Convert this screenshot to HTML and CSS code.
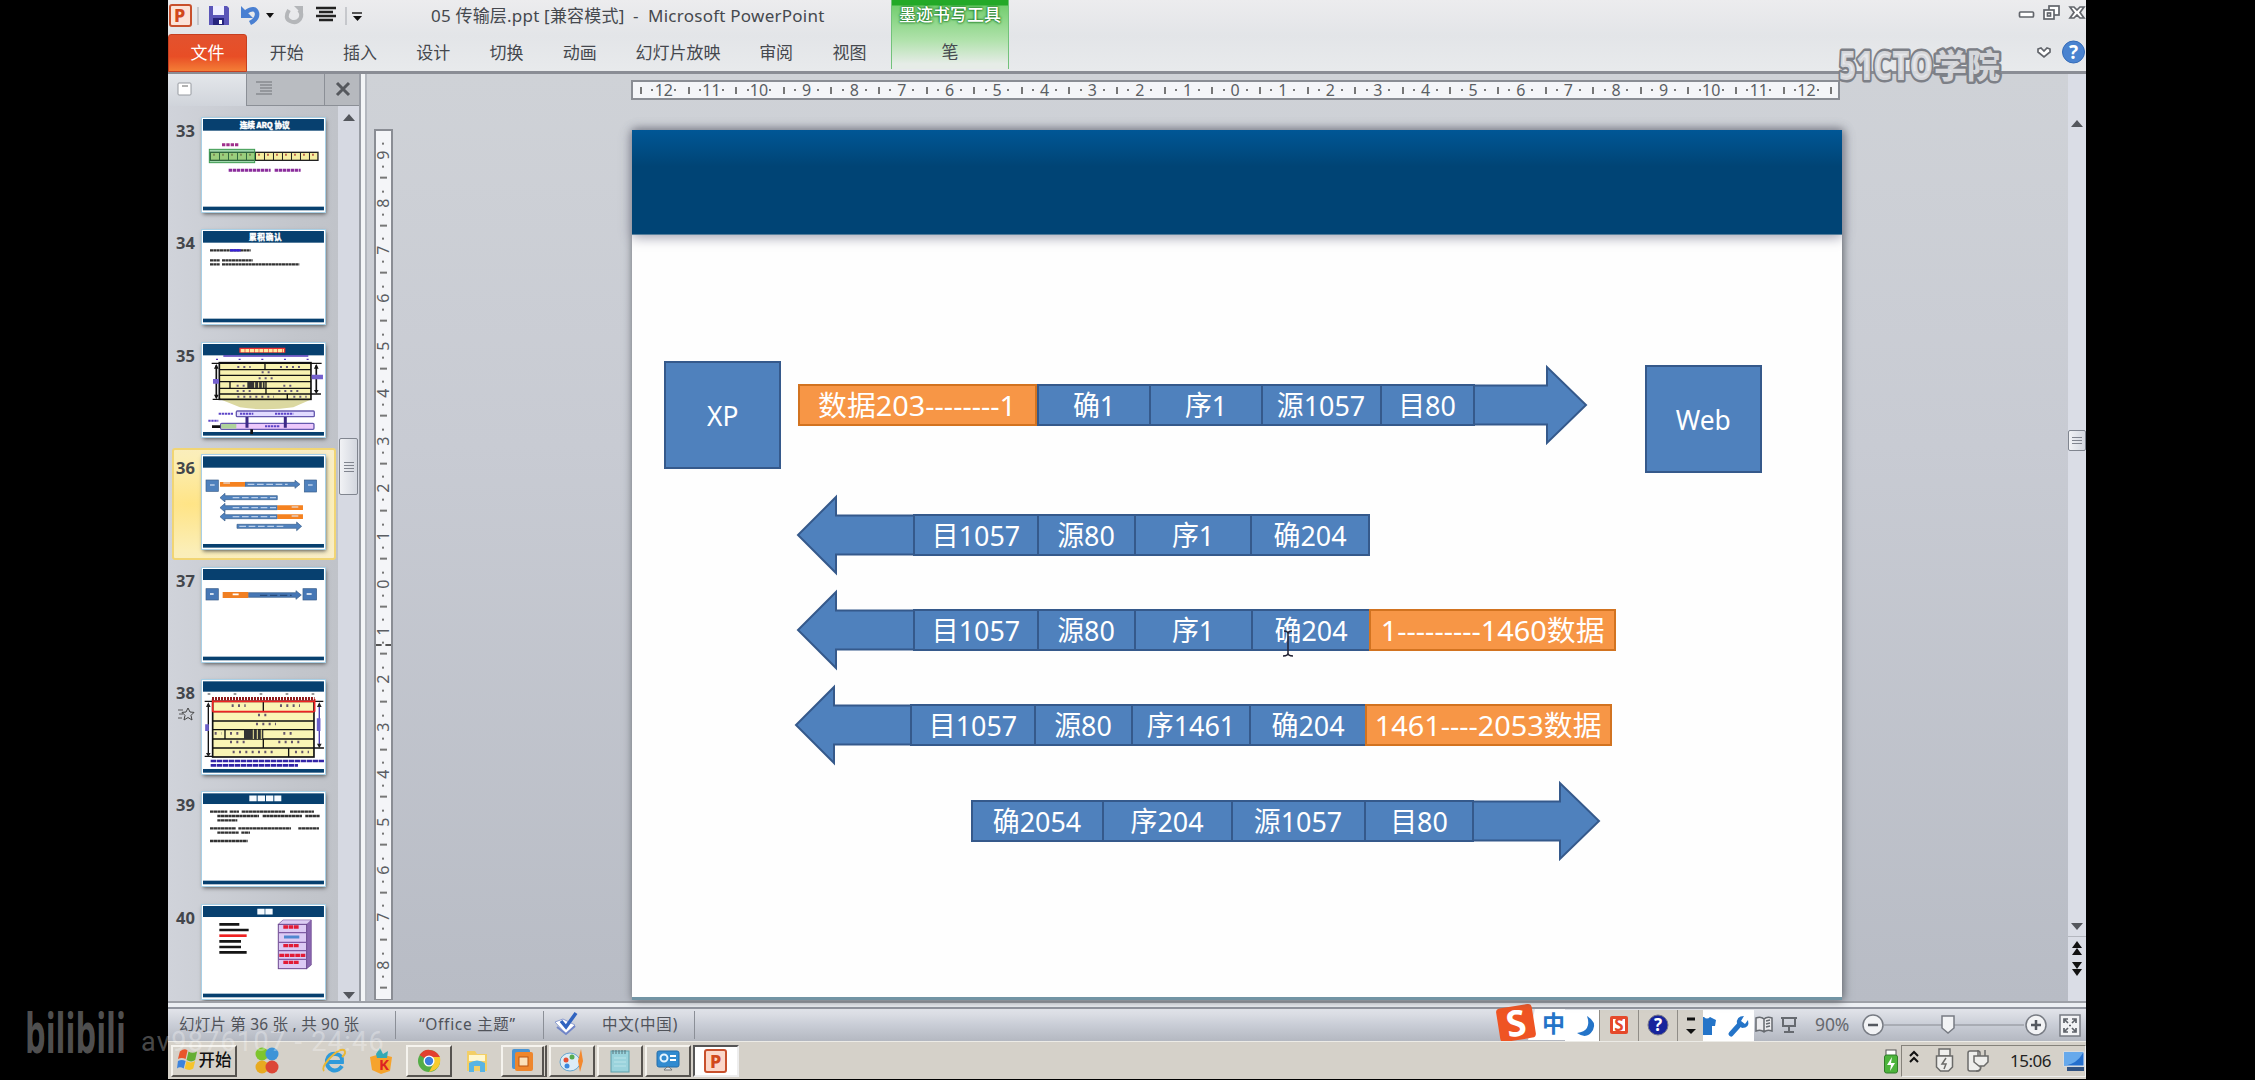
FILE: index.html
```html
<!DOCTYPE html>
<html lang="zh-CN">
<head>
<meta charset="utf-8">
<title>05 传输层.ppt - Microsoft PowerPoint</title>
<link rel="stylesheet" href="styles.css">
</head>
<body>
<div class="window">
  <header class="ribbon">
    <div class="ribbon-left">
      <div class="title-row">
        <svg class="quick" width="200" height="34" viewBox="0 0 200 34">
          <rect x="2" y="5" width="21" height="21" rx="2" fill="#fbe3d8" stroke="#c8502c" stroke-width="2"/>
          <text x="6" y="22" class="p-letter" font-size="18">P</text>
          <path d="M30 7v18M178 7v18" stroke="#a4a7ad"/>
          <path d="M41 6h18l2 2v17H41z" fill="#5a55b8"/><rect x="45" y="6" width="11" height="9" fill="#eef"/><rect x="45" y="18" width="11" height="7" fill="#26247c"/><rect x="51" y="20" width="3" height="4" fill="#fff"/>
          <path d="M78 12q9-6 11 1q1 6-7 10" fill="none" stroke="#4a80d2" stroke-width="4.500"/><path d="M73 6v12h12z" fill="#4a80d2"/>
          <path d="M98 13h8l-4 5z" fill="#111"/><path d="M121 10q-5 8 1 11q6 3 10-2q3-5-1-9" fill="none" stroke="#b4b6b9" stroke-width="4"/><path d="M126 6h9v9z" fill="#b4b6b9"/>
          <path d="M148 8h20M151 12h14M148 16h20M151 20h14" stroke="#222" stroke-width="2.300"/><path d="M184 13h10" stroke="#222" stroke-width="1.500"/><path d="M185 16h9l-4.500 5z" fill="#111"/>
        </svg>
        <span class="doc-title">05 传输层.ppt [兼容模式]</span><span class="app-title">-&nbsp; Microsoft PowerPoint</span>
      </div>
      <nav class="tabs">
        <span class="tab file">文件</span><span class="tab first">开始</span><span class="tab">插入</span><span class="tab">设计</span><span class="tab">切换</span><span class="tab">动画</span><span class="tab wide">幻灯片放映</span><span class="tab">审阅</span><span class="tab">视图</span>
      </nav>
    </div>
    <div class="context"><span class="context-title">墨迹书写工具</span><span class="context-tab">笔</span></div>
    <svg class="controls" width="80" height="72" viewBox="0 0 80 72">
      <g fill="#fff" stroke="#62656b" stroke-width="1.700"><rect x="13.500" y="12" width="14" height="5" rx="1"/><rect x="43" y="6" width="10" height="9"/><rect x="38" y="10" width="10" height="9"/><rect x="41.500" y="13" width="3" height="3"/><path d="M64 7h4l3 3 3-3h4l-4 5.500 4 5.500h-4l-3-3-3 3h-4l4-5.500z"/><path d="M32 49l3-1 3 3 3-3 3 1v3l-6 5-6-5z"/></g>
      <circle cx="67.500" cy="52" r="11" fill="#4a83d0" stroke="#346bb8"/><text x="67.500" y="59" text-anchor="middle" class="help-mark">?</text>
    </svg>
  </header>

  <main class="work">
    <aside class="outline">
      <div class="pane-tabs">
        <span class="pane-active"><svg width="18" height="16"><rect x="1" y="2" width="13" height="12" rx="1" fill="#fff" stroke="#969aa0"/><path d="M5 5h6" stroke="#666"/></svg></span>
        <span class="pane-other"><svg width="18" height="16"><path d="M0 2h16M4 5h12M4 8h12M4 11h12M0 14h16" stroke="#888b90" stroke-width="1.300"/></svg></span>
        <span class="pane-close"><svg width="16" height="16"><path d="M2 2l12 12M14 2L2 14" stroke="#55585d" stroke-width="3"/></svg></span>
      </div>
      <div class="pane-body">
        <div class="thumbs">
          <div class="thumb"><b>33</b>
            <svg viewBox="126 24 370 282"><rect class="hd" x="129" y="27" width="363" height="35"/><rect class="hd" x="129" y="290" width="363" height="11"/>
              <text x="314" y="53" class="tt" textLength="150">连续 ARQ 协议</text>
              <path d="M186 104h50" stroke="#a0308c" stroke-width="9" stroke-dasharray="10 3"/>
              <rect x="150" y="127" width="324" height="24" fill="#f6eea0" stroke="#222" stroke-width="4"/>
              <path d="M150 139h324" stroke="#222" stroke-width="22" stroke-dasharray="3 24"/><path d="M160 134h306" stroke="#a02828" stroke-width="6" stroke-dasharray="4 23"/>
              <rect x="148" y="118" width="136" height="40" fill="#3fae5a" fill-opacity=".5" stroke="#3c9a50" stroke-width="3"/>
              <path d="M206 181h126M344 181h78" stroke="#8b2d9c" stroke-width="9" stroke-dasharray="10 2"/>
            </svg></div>
          <div class="thumb"><b>34</b>
            <svg viewBox="126 361 370 282"><rect class="hd" x="129" y="364" width="363" height="35"/><rect class="hd" x="129" y="627" width="363" height="11"/>
              <text x="316" y="391" class="tt" textLength="98">累积确认</text>
              <path d="M150 422h122M150 452h30M186 452h92M150 464h30M186 464h232" stroke="#333" stroke-width="7" stroke-dasharray="9 1"/><path d="M210 422h32" stroke="#3822d8" stroke-width="7"/>
            </svg></div>
          <div class="thumb"><b>35</b>
            <svg viewBox="126 699 370 282"><rect class="hd" x="129" y="702" width="363" height="34"/><rect class="hd" x="129" y="966" width="363" height="11"/>
              <path d="M238 721h138" stroke="#e33" stroke-width="15"/><path d="M242 722h130" stroke="#ffe9a0" stroke-width="10" stroke-dasharray="12 2"/>
              <path d="M190 738h255" stroke="#5538ba" stroke-width="5"/><path d="M168 748h310" stroke="#5538ba" stroke-width="4" stroke-dasharray="6 62"/>
              <path d="M180 868h275l-55 24q-80 12-160 0z" fill="#dbd8a0"/>
              <rect x="178" y="758" width="275" height="110" fill="#f8f2b0" stroke="#111" stroke-width="5"/>
              <path d="M155 760h330M178 779h275M178 796h275M178 815h275M178 835h275M178 852h275M315 758v21M318 815v37M382 852v16M210 815v20M158 868h24M453 852h30" stroke="#111" stroke-width="4"/><rect x="262" y="815" width="52" height="20" fill="#333"/><path d="M284 817v16M296 817v16M307 817v16" stroke="#f6eea0" stroke-width="3"/>
              <path d="M232 771h40M360 771h60M305 787h30M296 805h50M230 827h30M370 827h30M230 843h50M355 843h64M232 860h110M400 860h40" stroke="#665a78" stroke-width="6" stroke-dasharray="6 12"/>
              <path d="M169 766v96M469 766v80" stroke="#111" stroke-width="5"/><path d="M162 776l7-14 7 14M162 854l7 14 7-14M462 776l7-14 7 14M462 840l7 12 7-12" fill="#111"/>
              <path d="M159 814h18M455 801h34" stroke="#7460ce" stroke-width="14"/>
              <rect x="229" y="903" width="234" height="17" rx="3" fill="#e1dbff" stroke="#6559ae" stroke-width="4"/><rect x="182" y="940" width="280" height="18" rx="3" fill="#edc9fb" stroke="#6559ae" stroke-width="4"/><rect x="184" y="942" width="45" height="14" fill="#aed39b"/>
              <path d="M176 911h45M240 911h40M345 911h55M145 932h30M315 949h44" stroke="#5d46c8" stroke-width="6" stroke-dasharray="7 2"/><path d="M261 921v32M376 921v32" stroke="#3d2a87" stroke-width="9"/><path d="M156 950h25M275 958v14" stroke="#111" stroke-width="8"/>
            </svg></div>
          <div class="thumb selected"><b>36</b>
            <svg viewBox="126 1036 370 282"><rect class="hd" x="129" y="1040" width="363" height="34"/><rect class="hd" x="129" y="1303" width="363" height="11"/>
              <g fill="#4f81bd" stroke="#385d8a" stroke-width="2"><rect x="138" y="1111" width="37" height="34"/><rect x="433" y="1111" width="37" height="36"/>
              <path d="M255 1118h150v-6l15 12-15 12v-6H255zM352 1158H195v-7l-15 13 15 13v-7h157zM352 1188H195v-7l-15 13 15 13v-7h157zM352 1215H195v-7l-15 13 15 13v-7h157zM231 1244h179v-7l15 13-15 13v-7H231z"/></g>
              <path d="M180 1124h75M352 1194h77M352 1221h77" stroke="#f58220" stroke-width="14"/>
              <path d="M150 1126h14M190 1120h22M263 1124h120M218 1164h130M218 1194h130M218 1221h130M395 1192h28M395 1219h28M238 1250h140M444 1126h14" stroke="#dfe9f8" stroke-width="4" stroke-dasharray="20 8" opacity=".75"/>
            </svg></div>
          <div class="thumb"><b>37</b>
            <svg viewBox="126 54 370 282"><rect class="hd" x="129" y="57" width="363" height="33"/><rect class="hd" x="129" y="320" width="363" height="11"/>
              <g fill="#4677b5" stroke="#385d8a" stroke-width="2"><rect x="138" y="116" width="37" height="34"/><rect x="429" y="116" width="41" height="34"/><path d="M265 128h143v-6l16 13-16 13v-6H265z"/></g><path d="M188 135h77" stroke="#f07f22" stroke-width="18"/><path d="M150 132h11M218 133h18M440 132h15" stroke="#fff" stroke-width="5"/><path d="M300 136h95" stroke="#284c7c" stroke-width="4" stroke-dasharray="22 8"/>
            </svg></div>
          <div class="thumb"><b>38</b>
            <svg class="star" viewBox="0 0 17 14"><path d="M0 3h5M1 7h4M0 11h4" stroke="#555"/><path d="M10 1l2 4 4 .4-3 3 1 4.600-4-2.500L6 13l1-4.600-3-3 4-.4z" fill="none" stroke="#444"/></svg>
            <svg viewBox="126 391 370 282"><rect class="hd" x="129" y="395" width="363" height="31"/><rect class="hd" x="129" y="658" width="363" height="11"/>
              <path d="M143 433h345" stroke="#777" stroke-width="4" stroke-dasharray="8 70"/>
              <rect x="158" y="455" width="304" height="167" fill="#faf5b5" stroke="#111" stroke-width="5"/>
              <path d="M134 455h356M158 486h304M158 514h304M158 540h304M158 568h304M158 595h334M310 455v31M195 540v28M310 568v27M386 595v27M134 620h24" stroke="#111" stroke-width="4"/>
              <rect x="252" y="540" width="58" height="28" fill="#333"/><path d="M280 540v28M292 540v28M304 540v28" stroke="#f6eea0" stroke-width="3"/>
              <path d="M158 455h306M158 486h304M158 448v38M464 448v38" stroke="#e22" stroke-width="5"/><path d="M156 447h308" stroke="#911a1a" stroke-width="10" stroke-dasharray="6 3"/>
              <path d="M215 468h42M360 468h60M294 496h34M288 523h60M164 551h20M210 551h32M370 551h34M210 577h52M355 577h72M218 607h122M405 607h42" stroke="#65566b" stroke-width="8" stroke-dasharray="6 13"/>
              <path d="M145 464v152" stroke="#111" stroke-width="4"/><path d="M478 464v124" stroke="#4a38b0" stroke-width="4"/><path d="M138 472l7-14 7 14M138 610l7 12 7-12M471 472l7-14 7 14M471 582l7 14 7-14" fill="#222"/><path d="M141 524v20M476 506v38" stroke="#6b60ca" stroke-width="11"/>
              <path d="M152 634h340M152 647h262" stroke="#3325a8" stroke-width="8" stroke-dasharray="16 2"/>
            </svg></div>
          <div class="thumb"><b>39</b>
            <svg viewBox="126 729 370 282"><rect class="hd" x="129" y="733" width="363" height="32"/><rect class="hd" x="129" y="995" width="363" height="11"/>
              <path d="M268 748h96" stroke="#f6fbff" stroke-width="17" stroke-dasharray="22 3"/>
              <path d="M150 788h52M209 788h28M245 788h130M390 788h72M172 801h125M308 801h118M436 801h44M172 814h60M150 838h78M235 838h158M415 838h62M172 851h64M244 851h26M150 876h113" stroke="#333" stroke-width="7" stroke-dasharray="10 1"/>
            </svg></div>
          <div class="thumb"><b>40</b>
            <svg viewBox="126 1066 370 282"><rect class="hd" x="129" y="1069" width="363" height="33"/><rect class="hd" x="129" y="1332" width="363" height="11"/>
              <path d="M292 1086h46" stroke="#f6fbff" stroke-width="17" stroke-dasharray="22 2"/>
              <path d="M178 1124h60M178 1141h88M178 1175h65M178 1192h65M178 1208h82" stroke="#151515" stroke-width="8"/><path d="M178 1158h82" stroke="#e22" stroke-width="8"/>
              <path d="M355 1124l14-13h85v135l-14 11z" fill="#8a66b0" stroke="#6a478e" stroke-width="2"/><path d="M357 1123l12-11h83l-12 11z" fill="#dccdf3"/><rect x="355" y="1124" width="85" height="133" fill="#ddcaf4" stroke="#6a478e" stroke-width="3"/><path d="M355 1149h85M355 1178h85M355 1203h85M355 1229h85" stroke="#7f5ca4" stroke-width="4"/><path d="M370 1132h48M370 1188h48M358 1217h78M370 1238h48" stroke="#e21c36" stroke-width="10" stroke-dasharray="14 2"/><path d="M372 1162h46" stroke="#4f87d0" stroke-width="9"/>
            </svg></div>
        </div>
        <div class="scroll-left"><i class="up"></i><div class="grip"><s></s><s></s><s></s><s></s></div><i class="down"></i></div>
      </div>
    </aside>

    <div class="splitter"></div>
    <div class="v-area">
      <div class="ruler-v"><i></i><span>9</span><span>8</span><span>7</span><span>6</span><span>5</span><span>4</span><span>3</span><span>2</span><span>1</span><span>0</span><span>1</span><span>2</span><span>3</span><span>4</span><span>5</span><span>6</span><span>7</span><span>8</span></div>
    </div>
    <section class="editor">
      <div class="ruler-h"><span>12</span><span>11</span><span>10</span><span>9</span><span>8</span><span>7</span><span>6</span><span>5</span><span>4</span><span>3</span><span>2</span><span>1</span><span>0</span><span>1</span><span>2</span><span>3</span><span>4</span><span>5</span><span>6</span><span>7</span><span>8</span><span>9</span><span>10</span><span>11</span><span>12</span><i></i></div>
      <div class="slide">
        <div class="banner"></div>
        <div class="host xp"><span>XP</span></div>
        <div class="host web"><span>Web</span></div>

        <div class="packet r1">
          <div class="cell data c239"><span>数据203--------1</span></div><div class="cell c112"><span>确1</span></div><div class="cell c112"><span>序1</span></div><div class="cell c119"><span>源1057</span></div><div class="cell c95 last"><span>目80</span></div>
          <svg class="arrow" width="114" height="84" viewBox="0 0 114 84"><path d="M0 22.500H72V4L111 42L72 80V61.500H0"/></svg>
        </div>
        <div class="packet r2">
          <svg class="arrow" width="117" height="84" viewBox="0 0 117 84"><path d="M117 22.500H40V4L2 42L40 80V61.500H117"/></svg>
          <div class="cell c124"><span>目1057</span></div><div class="cell c97"><span>源80</span></div><div class="cell c116"><span>序1</span></div><div class="cell c120 last"><span>确204</span></div>
        </div>
        <div class="packet r3">
          <svg class="arrow" width="117" height="84" viewBox="0 0 117 84"><path d="M117 22.500H40V4L2 42L40 80V61.500H117"/></svg>
          <div class="cell c124"><span>目1057</span></div><div class="cell c97"><span>源80</span></div><div class="cell c117"><span>序1</span></div><div class="cell c118"><span>确204</span></div><div class="cell data c247"><span>1---------1460数据</span></div>
        </div>
        <div class="packet r4">
          <svg class="arrow" width="116" height="84" viewBox="0 0 116 84"><path d="M116 22.500H40V4L2 42L40 80V61.500H116"/></svg>
          <div class="cell c124"><span>目1057</span></div><div class="cell c97"><span>源80</span></div><div class="cell c118"><span>序1461</span></div><div class="cell c116"><span>确204</span></div><div class="cell data c247"><span>1461----2053数据</span></div>
        </div>
        <div class="packet r5">
          <div class="cell c131"><span>确2054</span></div><div class="cell c129"><span>序204</span></div><div class="cell c133"><span>源1057</span></div><div class="cell c110 last"><span>目80</span></div>
          <svg class="arrow" width="128" height="84" viewBox="0 0 128 84"><path d="M0 22.500H86V4L125 42L86 80V61.500H0"/></svg>
        </div>
        <svg class="ibeam" width="12" height="28" viewBox="0 0 12 28"><path d="M2 1q4 0 4 3q0-3 4-3M6 4v20M1 26q5 0 5-3q0 3 5 3" fill="none" stroke="#223" stroke-width="1.500"/></svg>
      </div>
    </section>
    <div class="scroll-right"><i class="up"></i><div class="grip"><s></s><s></s><s></s></div><i class="down"></i><hr><b class="up"></b><b class="up"></b><b class="down gap"></b><b class="down"></b></div>
  </main>
  <div class="rail"></div>

  <footer class="status">
    <span class="st st-page">幻灯片 第 36 张 , 共 90 张</span>
    <span class="st st-theme">“Office 主题”</span>
    <span class="st st-lang"><svg width="26" height="24" viewBox="0 0 26 24"><path d="M1 10l8-3 12 6-9 9z" fill="#fff" stroke="#8b9cd0"/><path d="M3 15l9 7 9-8" fill="none" stroke="#7186c8" stroke-width="2"/><path d="M7 9l5 6L22 1" fill="none" stroke="#3164c0" stroke-width="3.500"/></svg>中文(中国)</span>
    <span class="fill"></span>
    <div class="ime"><svg width="69" height="38" viewBox="0 0 69 38"><path d="M39 6h30v31H32z" fill="#fff"/><g transform="rotate(-9 20 20)"><rect x="2" y="3" width="36" height="34" rx="4" fill="#ef5423"/><text x="20" y="33" text-anchor="middle" class="sogou">S</text></g><text x="46" y="29" class="zhong">中</text></svg><svg class="moon" width="34" height="31" viewBox="0 0 34 31"><path d="M22 6q5 15-10 17q10 7 16-3q4-8-6-14z" fill="#2474c8"/></svg></div>
    <div class="langbar"><span><svg width="20" height="22"><rect x="1" y="2" width="18" height="18" rx="2" fill="#e5492a"/><rect x="4" y="5" width="12" height="12" fill="#fff"/><text x="10" y="17" text-anchor="middle" class="small-s">S</text></svg></span><span><svg width="22" height="22"><circle cx="11" cy="11" r="10" fill="#17249c" stroke="#778"/><text x="11" y="17" text-anchor="middle" class="small-q">?</text></svg></span><span><svg width="10" height="22"><path d="M1 5h8" stroke="#111" stroke-width="3"/><path d="M0 15h10l-5 5z" fill="#111"/></svg></span></div>
    <svg class="ime-tools" width="51" height="31" viewBox="0 0 51 31"><path d="M0 7h1q3 3 6 0l6 3-1 6h-3v9H0z" fill="#2474c8"/><path d="M28 24L37 14" stroke="#2474c8" stroke-width="5" stroke-linecap="round"/><path d="M34 14q-1-8 7-8l-3 5 4 3 3-4q2 8-6 8z" fill="#2474c8"/></svg>
    <svg class="views" width="52" height="24" viewBox="0 0 52 24"><path d="M1 5q5-2 8 1q3-3 8-1v13q-5-2-8 1q-3-3-8-1zM9 6v13M11 8l4-1M11 11l4-1M11 14l4-1" fill="#ececef" stroke="#666a70" stroke-width="1.500"/><path d="M26 5h16M28 5v8h12V5M34 13v5M29 19h10" fill="none" stroke="#666a70" stroke-width="2"/></svg>
    <span class="percent">90%</span>
    <svg class="zoombar" width="226" height="26" viewBox="0 0 226 26"><path d="M24 13h140" stroke="#888b92"/><g fill="#f2f3f5" stroke="#777b83" stroke-width="1.500"><circle cx="13" cy="13" r="10"/><circle cx="176" cy="13" r="10"/><path d="M82 4h12v12l-6 5-6-5z"/><rect x="200" y="3" width="20" height="21"/></g><path d="M8 13h10M171 13h10M176 8v10" stroke="#555960" stroke-width="2.500"/><path d="M204 11V7h4M216 11V7h-4M204 16v4h4M216 16v4h-4M205 8l3 3M215 8l-3 3M205 19l3-3M215 19l-3-3M209 13.500h2" fill="none" stroke="#5d6168" stroke-width="1.700"/></svg>
  </footer>

  <div class="taskbar">
    <div class="task start"><svg width="22" height="26" viewBox="0 0 23 26"><path d="M3 4q5-4 8-1l-2 9q-4-2-8 0z" fill="#e8562c"/><path d="M12 4q4 3 9 0l-2 9q-4 3-9 0z" fill="#65ae35"/><path d="M1 14q4-2 8 0l-2 8q-4-3-7 0z" fill="#3d83dc"/><path d="M10 14q4 3 9 0l-2 8q-4 3-9 0z" fill="#f7c42b"/></svg>开始</div>
    <svg class="ic orb" width="26" height="28" viewBox="0 0 26 28"><circle cx="8" cy="7" r="6.500" fill="#7ec52c"/><circle cx="18" cy="7" r="6.500" fill="#3e94d7"/><circle cx="8" cy="20" r="6.500" fill="#e8aa20"/><circle cx="18" cy="20" r="6.500" fill="#dc4636"/></svg>
    <svg class="ic ie" width="26" height="28" viewBox="0 0 26 28"><path d="M21 19q-4 6-10 4q-6-3-5-10q2-7 9-6q7 1 6 8H7" fill="none" stroke="#2f9ada" stroke-width="4"/><path d="M3 24q-3-3 5-12Q18 1 23 3q3 3-2 7" fill="none" stroke="#eab735" stroke-width="2"/></svg>
    <svg class="ic gift" width="26" height="28" viewBox="0 0 26 28"><path d="M2 10l10-3 12 3-2 14-9 3-9-4z" fill="#f6a32c"/><path d="M8 7l4-6 3 6 5-3-1 7H9z" fill="#34a9b5"/><text x="16" y="23" text-anchor="middle" class="k">K</text></svg>
    <div class="task chrome"><svg width="24" height="26" viewBox="0 0 24 26"><circle cx="12" cy="13" r="11" fill="#54ad47"/><path d="M12 13L2.500 7Q7 1 13 2q7 1 10 7H12z" fill="#e2402e"/><path d="M12 9h11q2 12-11 15l5-9z" fill="#f7cb2c"/><circle cx="12" cy="13" r="5.500" fill="#fff"/><circle cx="12" cy="13" r="4.200" fill="#3c7fdc"/></svg></div>
    <svg class="ic folder" width="26" height="28" viewBox="0 0 26 28"><path d="M3 4h8l2 3h10v17H3z" fill="#f3cf66"/><path d="M5 8h16v6H5z" fill="#fff7cf"/><path d="M5 25v-9q8-5 16 0v9h-5v-6h-6v6z" fill="#58b4e3"/></svg>
    <div class="task double"><svg width="24" height="26" viewBox="0 0 24 26"><rect x="1" y="1" width="18" height="20" rx="2" fill="#4a94d2"/><rect x="4" y="4" width="18" height="19" rx="2" fill="#ee862c"/><rect x="8" y="9" width="9" height="9" fill="#fbe0b8" stroke="#b95410"/></svg></div>
    <div class="task"><svg width="26" height="28" viewBox="0 0 26 28"><ellipse cx="11" cy="15" rx="10" ry="9" fill="#dcecf6" stroke="#65a6cf"/><circle cx="7" cy="13" r="2.500" fill="#e65034"/><circle cx="13" cy="10" r="2.500" fill="#56ab50"/><circle cx="8" cy="19" r="2.500" fill="#3b88dc"/><path d="M22 2l-3 12 2 11 3-11z" fill="#f4882c"/></svg></div>
    <div class="task"><svg width="24" height="28" viewBox="0 0 24 28"><rect x="3" y="4" width="18" height="21" fill="#9ad3dc" stroke="#5d9fab"/><path d="M5 3v4M8 3v4M11 3v4M14 3v4M17 3v4" stroke="#56727b"/><path d="M6 11h12M6 15h12M6 19h12" stroke="#b9e4e9"/></svg></div>
    <div class="task"><svg width="26" height="26" viewBox="0 0 26 26"><rect x="2" y="3" width="22" height="16" rx="2" fill="#328bd0" stroke="#256da8"/><circle cx="9" cy="10" r="3.500" fill="none" stroke="#e5f4ff" stroke-width="2"/><path d="M15 8h6M15 12h6" stroke="#fff" stroke-width="2"/><path d="M9 22q4-6 8 0z" fill="#e3e7eb" stroke="#777"/></svg></div>
    <div class="task current"><svg width="26" height="26" viewBox="0 0 26 26"><rect x="2" y="2" width="21" height="22" rx="2" fill="#fbd7c9" stroke="#c8502c" stroke-width="2"/><text x="7" y="19.500" class="p-letter" font-size="18">P</text></svg></div>
    <span class="fill"></span>
    <svg class="battery" width="16" height="26" viewBox="0 0 16 26"><rect x="3" y="2" width="10" height="6" fill="#fff" stroke="#555"/><rect x="1.500" y="7" width="13" height="18" rx="2" fill="#4db43c" stroke="#317c2a"/><path d="M9 9l-5 8h4l-1 6 5-8H8z" fill="#fff"/></svg>
    <div class="tray">
      <svg width="108" height="30" viewBox="0 0 108 30"><path d="M8 10l4-4 4 4M8 16l4-4 4 4" fill="none" stroke="#111" stroke-width="2"/><g fill="#eeeeec" stroke="#6b6b69" stroke-width="1.500"><rect x="37" y="3" width="11" height="7"/><path d="M34.500 10h16v11l-4 4h-8l-4-4z"/><path d="M44 12l-4 6h4l-2 5" fill="none"/><rect x="66" y="5" width="12" height="20" rx="2"/><path d="M72 10h14v6l-4 4h-5l-5-4zM76 10V4M83 10V4M79 20q0 5-5 5"/></g></svg>
      <span class="clock">15:06</span>
      <svg width="22" height="22" viewBox="0 0 22 22"><rect x="1" y="2" width="20" height="14" fill="#246fce" stroke="#dce6f1"/><path d="M1 16Q14 14 20 3V2H1z" fill="#66a9ec"/><rect x="4" y="17" width="17" height="4" fill="#315383"/></svg>
    </div>
  </div>
</div>
<svg class="watermark-51" width="180" height="60" viewBox="0 0 180 60"><text x="8" y="43" textLength="94" lengthAdjust="spacingAndGlyphs" class="mark-latin">51CTO</text><text x="103" y="41" textLength="66" lengthAdjust="spacingAndGlyphs" class="mark-cjk">学院</text></svg>
<div class="video-mark"><svg width="112" height="76" viewBox="0 0 112 76"><text x="3" y="57" textLength="101" lengthAdjust="spacingAndGlyphs" class="bili">bilibili</text></svg><span>av9876107 - 24:46</span></div>
</body>
</html>
```
FILE: styles.css
```css
* { box-sizing: border-box; }
body { margin: 0; width: 2255px; height: 1080px; overflow: hidden; background: #000; position: relative; font-family: "Noto Sans", "Noto Sans CJK SC", sans-serif; color: #45484e; }
svg { display: block; flex: none; overflow: visible; }
.window { margin-left: 168px; width: 1918px; height: 1079px; display: flex; flex-direction: column; background: #c8cbd2; overflow: hidden; }
.fill { flex: 1; }

.ribbon { height: 74px; flex: none; display: flex; background: linear-gradient(#ececee, #e3e5e8 50%, #e8eaec); border-bottom: 3px solid #8a8d95; }
.ribbon-left { width: 719px; margin-right: 4px; }
.title-row { height: 34px; display: flex; align-items: center; font-size: 17px; line-height: 24px; white-space: pre; }
.title-row span { margin-top: -3px; }
.quick { margin-right: 63px; }
.doc-title { width: 202px; letter-spacing: .2px; }
.app-title { letter-spacing: .25px; }
.tabs { display: flex; height: 38px; font-size: 17px; }
.tab { width: 73.300px; padding-bottom: 3px; display: flex; align-items: center; justify-content: center; }
.tab.first { margin-left: 3px; }
.tab.wide { width: 123px; }
.tab.file { width: 79px; color: #fff; background: linear-gradient(#e2522e, #e84e26 60%, #f47e36); border: 1px solid #c63f20; border-radius: 3px 3px 0 0; }
.context { width: 118px; height: 69px; background: linear-gradient(#23a927 5px, #74ce70 6px, #b0e2ab 40px, #e6ece7 64px); border-left: 1px solid #72c27a; border-right: 1px solid #72c27a; display: flex; flex-direction: column; align-items: center; font-size: 17px; }
.context-title { height: 34px; line-height: 30px; color: #fff; font-weight: 500; text-shadow: 0 0 2px #23812a, 0 0 2px #23812a, 0 0 3px #23812a; white-space: nowrap; }
.context-tab { height: 35px; line-height: 36px; }
.controls { margin-left: auto; }
.help-mark { font: bold 19px "Noto Sans", sans-serif; fill: #fff; }
.p-letter { font-family: "Noto Sans", sans-serif; font-weight: 800; fill: #d2481b; }

.work { height: 927px; flex: none; display: flex; background: linear-gradient(#cfd2d7, #c8cbd3 40%, #b8bcc5); }
.outline { width: 191px; display: flex; flex-direction: column; }
.pane-tabs { height: 32px; display: flex; }
.pane-active { width: 78px; padding: 7px 9px; background: linear-gradient(#e4e7eb, #d0d4db); }
.pane-other { width: 79px; padding: 6px 9px; background: #b9bcc1; border: 1px solid #8b8f96; border-top: 0; }
.pane-close { width: 34px; padding: 7px 0 7px 10px; background: #b6b9be; border-bottom: 1px solid #8b8f96; }
.pane-body { height: 895px; display: flex; background: linear-gradient(90deg, #d0d3da, #c2c5cb 70%, #bfc2c8); overflow: hidden; }
.thumbs { width: 170px; padding-top: 8px; }
.thumb { height: 112.400px; padding: 4px 0 0 8px; display: flex; position: relative; }
.thumb b { width: 26px; font-size: 16.500px; line-height: 18px; margin-top: 4px; color: #43464b; }
.thumb > svg:last-child { width: 123.300px; height: 94px; overflow: hidden; background: #fff; outline: 1px solid #a8d0e6; box-shadow: 1px 2px 4px #555; }
.thumb.selected { z-index: 0; }
.thumb.selected::before { content: ""; position: absolute; z-index: -1; left: 4px; top: -3px; width: 160px; height: 108px; border: 2px solid #f1d574; border-radius: 3px; background: radial-gradient(ellipse at 10% 50%, #ffe486, #fbeeb6 60%, #f8edca); }
.star { position: absolute; left: 10px; top: 31px; width: 17px; height: 14px; }
.hd { fill: #07406f; }
.tt { fill: #fff; stroke: #fff; font: 900 23px "Noto Sans CJK SC", sans-serif; text-anchor: middle; }

.scroll-left { width: 21px; background: #d6d9e2; display: flex; flex-direction: column; align-items: center; padding: 8px 0 0; }
.scroll-left .grip { width: 19px; height: 57px; margin-top: 317px; }
.scroll-left .down { margin-top: 497px; }
.grip { flex: none; background: linear-gradient(90deg, #f1f2f5, #d3d7df); border: 1px solid #80858f; border-radius: 2px; display: flex; flex-direction: column; justify-content: center; align-items: center; gap: 2px; }
.grip s { width: 10px; height: 1px; background: #80848e; }
i.up, i.down, b.up, b.down { flex: none; width: 0; height: 0; border-left: 6px solid transparent; border-right: 6px solid transparent; }
i.up, b.up { border-bottom: 7px solid #54575d; }
i.down, b.down { border-top: 7px solid #54575d; }
.splitter { width: 8px; background: #f3f5f7; border-left: 2px solid #999da5; border-right: 2px solid #b4b8bf; }
.v-area { width: 64px; padding: 55px 0 0 7px; }
.ruler-v { width: 19px; height: 871px; background: #f4f5f8; border: 2px solid #8a8d94; border-bottom-width: 1px; overflow: hidden; position: relative; }
.ruler-v i { position: absolute; left: 0; top: 513px; width: 15px; border-top: 2px dashed #555; }
.ruler-v span { display: flex; width: 15px; height: 47.650px; align-items: center; justify-content: center; writing-mode: vertical-rl; transform: rotate(180deg); font-size: 16px; line-height: 15px; color: #5b5e63; background: linear-gradient(#777, #777) 50% 0 / 7px 2px no-repeat, linear-gradient(#777, #777) 50% 25% / 2px 2px no-repeat, linear-gradient(#777, #777) 50% 75% / 2px 2px no-repeat; }

.editor { width: 1430px; padding-left: 200px; }
.ruler-h { width: 1209px; height: 20px; margin: 6px 0 0; padding-left: 7px; background: #f4f5f8; border: 2px solid #8a8d94; display: flex; align-items: center; overflow: hidden; }
.ruler-h span { flex: none; width: 47.620px; height: 16px; text-align: center; font-size: 16px; line-height: 16px; color: #5b5e63; background: linear-gradient(#777, #777) 0 50% / 2px 7px no-repeat, linear-gradient(#777, #777) 25% 50% / 2px 2px no-repeat, linear-gradient(#777, #777) 75% 50% / 2px 2px no-repeat; }
.ruler-h i { width: 2px; height: 7px; background: #777; }
.slide { width: 1210px; height: 870px; margin: 30px 0 0 1px; background: #fefefe; position: relative; box-shadow: 1px 0 9px #555960; border-bottom: 3px solid #7294a4; }
.banner { height: 105px; background: linear-gradient(#005796, #004475 35%, #004475); box-shadow: 0 2px 12px #99a; border-bottom: 1px solid #567f9c; }
.host { position: absolute; width: 117px; height: 108px; display: flex; align-items: center; justify-content: center; background: #4f81bd; border: 2.500px solid #35598b; color: #fff; font-size: 28px; }
.host span { transform: scaleX(.94); }
.xp { left: 32px; top: 231px; }
.web { left: 1013px; top: 235px; }
.packet { position: absolute; height: 84px; display: flex; align-items: center; }
.arrow path { fill: #4f81bd; stroke: #35598b; stroke-width: 2; }
.cell { height: 42px; display: flex; align-items: center; justify-content: center; background: #4f81bd; border: 2.500px solid #35598b; border-right-width: 0; color: #fff; font-size: 28px; line-height: 30px; white-space: nowrap; }
.cell span { transform: scaleX(.96); }
.cell.data { background: #f79646; border-color: #d27320; border-right-width: 2px; }
.cell.data span { transform: scaleX(1.03); }
.cell.last { border-right-width: 2.500px; }
.r1 { left: 166px; top: 233px; }
.r2 { left: 164px; top: 363px; }
.r3 { left: 164px; top: 458px; }
.r4 { left: 162px; top: 553px; }
.r5 { left: 339px; top: 649px; }
.c95 { width: 95px; } .c97 { width: 97px; } .c110 { width: 110px; } .c112 { width: 112px; } .c116 { width: 116px; } .c117 { width: 117px; } .c118 { width: 118px; } .c119 { width: 119px; } .c120 { width: 120px; } .c124 { width: 124px; } .c129 { width: 129px; } .c131 { width: 131px; } .c133 { width: 133px; } .c239 { width: 239px; } .c247 { width: 247px; }
.ibeam { position: absolute; left: 650px; top: 500px; }

.scroll-right { margin-left: auto; width: 18px; background: #dadde6; display: flex; flex-direction: column; align-items: center; padding-top: 46px; }
.scroll-right .grip { width: 18px; height: 21px; margin-top: 303px; }
.scroll-right .down { margin-top: auto; }
.scroll-right hr { width: 18px; margin: 6px 0 4px; border: 0; border-top: 1px solid #b4b7bf; }
.scroll-right b { border-left-width: 5px; border-right-width: 5px; }
.scroll-right b.up { border-bottom-color: #111; }
.scroll-right b.down { border-top-color: #111; margin-top: 0; }
.scroll-right b.gap { margin-top: 7px; }
.scroll-right b:last-child { margin-bottom: 25px; }
.rail { height: 8px; flex: none; background: #eceff3; border-top: 2px solid #9da0a7; border-bottom: 2px solid #9296a0; }

.status { height: 32px; flex: none; display: flex; align-items: center; background: linear-gradient(#e2e4ea, #c9cdd6 50%, #b4b8c1); font-size: 15.500px; color: #50535a; }
.st { height: 28px; padding-bottom: 3px; display: flex; align-items: center; border-right: 1px solid #8b8f97; white-space: pre; }
.st-page { width: 228px; padding-left: 11px; letter-spacing: .2px; }
.st-theme { width: 148px; padding-left: 23px; letter-spacing: .7px; }
.st-lang { width: 151px; padding-left: 10px; gap: 22px; letter-spacing: .8px; }
.ime { display: flex; align-items: center; height: 38px; margin-top: -6px; }
.ime .moon { background: #fff; margin-top: 6px; }
.sogou { font: bold 36px "Noto Sans", sans-serif; fill: #fff; }
.zhong { font: bold 23px "Noto Sans CJK SC", sans-serif; fill: #2474c8; }
.langbar { width: 104px; height: 31px; display: flex; background: #d4d0c8; }
.langbar span { width: 39px; display: flex; align-items: center; justify-content: center; border-left: 1px solid #908d87; }
.langbar span:last-child { width: 26px; }
.small-s { font: bold 17px "Noto Sans", sans-serif; fill: #e5492a; }
.small-q { font: bold 17px "Noto Sans", sans-serif; fill: #fff; }
.ime-tools { background: #fff; }
.views { margin-left: 1px; }
.percent { margin: -2px 0 0 8px; width: 45px; font-size: 17.500px; letter-spacing: -.1px; color: #66696f; }

.taskbar { height: 38px; flex: none; background: #d5d1c9; border-top: 1px solid #ecebe6; display: flex; align-items: center; padding-left: 3px; }
.task { width: 46px; height: 32px; margin-right: 2px; display: flex; align-items: center; justify-content: center; border: 2px solid; border-color: #f5f3ee #56534f #56534f #f5f3ee; }
.start { width: 66px; margin-right: 17px; padding-bottom: 2px; color: #111; font-size: 16.500px; line-height: 24px; font-weight: 500; }
.orb { margin-right: 41px; }
.ie { margin-right: 21px; }
.gift { margin-right: 12px; }
.chrome { margin-right: 12px; }
.folder { margin-right: 11px; }
.double { border-right-width: 5px; border-right-style: double; }
.current { background: #fff; border-color: #555 #eee #eee #555; }
.k { font: bold 15px "Noto Sans", sans-serif; fill: #d22; }
.battery { margin-right: 2px; }
.tray { width: 185px; height: 32px; display: flex; align-items: center; border: 1px solid; border-color: #85827b #eee #eee #85827b; }
.clock { width: 54px; font-size: 17px; color: #222; letter-spacing: -.5px; }

.watermark-51 { position: absolute; left: 1831px; top: 37px; }
.mark-latin, .mark-cjk { fill: rgba(230,231,234,.85); stroke: #7d8087; stroke-width: 5px; paint-order: stroke; stroke-linejoin: round; }
.mark-latin { font: 800 41px "Open Sans", sans-serif; }
.mark-cjk { font: 900 33px "Noto Sans CJK SC", sans-serif; }
.video-mark { position: absolute; left: 22px; top: 996px; display: flex; color: rgba(255,255,255,.3); }
.video-mark span { font: 27px/32px Roboto, sans-serif; padding: 30px 0 0 7px; letter-spacing: 1.300px; white-space: pre; }
.bili { font: 700 56px "Open Sans", sans-serif; fill: rgba(255,255,255,.33); }
```
